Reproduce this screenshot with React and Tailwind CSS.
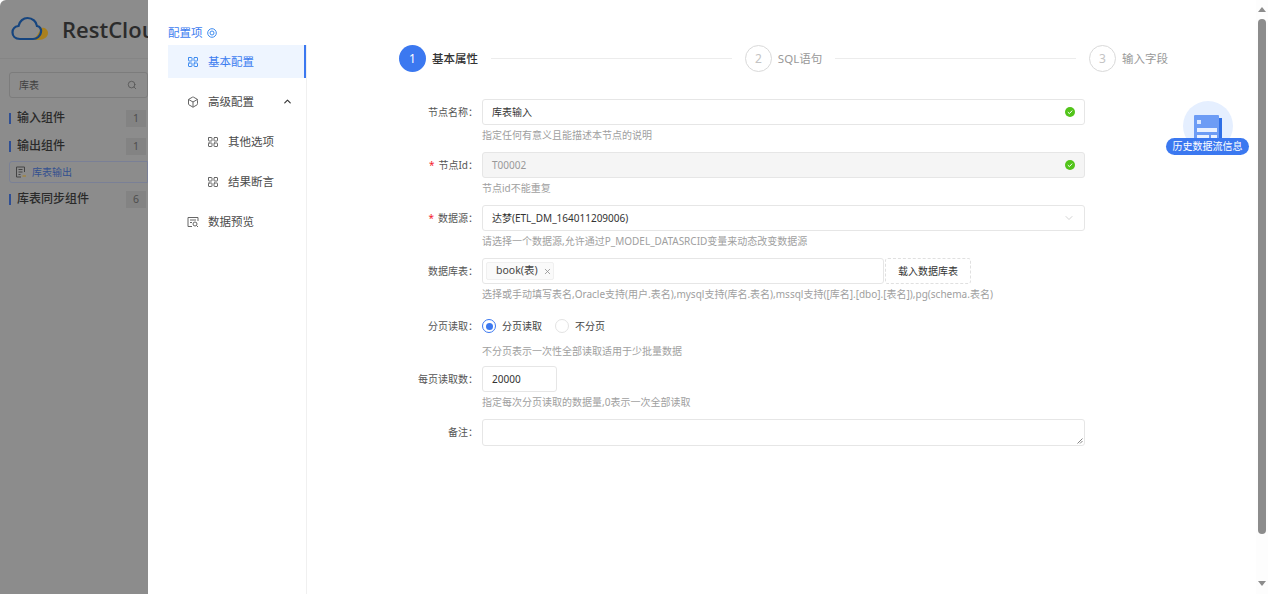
import { Box, ChevronDown, ChevronUp, LayoutGrid, Search, X } from "lucide-react";

const font = "font-['Noto_Sans','Noto_Sans_CJK_SC',sans-serif]";

function Group({ name, count }) {
  return (
    <div className="flex items-center h-[28px] pl-[9px]">
      <span className="w-[2px] h-[11px] bg-[#2f4f94] mr-[6px]" />
      <span className="flex-1 text-[12px] font-medium text-[#2a2a2a]">{name}</span>
      {count && <span className="w-[20px] h-[17px] mr-[2px] bg-[#838383] text-[10.5px] leading-[17px] text-center text-[#4d4d4d]">{count}</span>}
    </div>
  );
}

function MenuItem({ icon, label, active, sub, chevron }) {
  return (
    <div className={`flex items-center h-[33px] ${sub ? "pl-[39px]" : "pl-[19px]"} ${active ? "bg-[#eef5ff] text-[#3d7df0] border-r-[2px] border-[#3b78f0]" : "text-[#4a4a4a]"}`}>
      <span className="w-[12px] h-[12px] mr-[9px] flex items-center justify-center">{icon}</span>
      <span className="text-[11.5px]">{label}</span>
      {chevron && <ChevronUp className="w-[11px] h-[11px] ml-[28px] text-[#333]" strokeWidth={2.5} />}
    </div>
  );
}

function PreviewIcon() {
  return (
    <svg viewBox="0 0 12 12" className="w-[12px] h-[12px]" fill="none" stroke="#666" strokeWidth="1">
      <path d="M11 5V1.5H1V10.5H5" />
      <path d="M3 4H9M3 6.5H5" />
      <circle cx="8" cy="8" r="2" />
      <path d="M9.5 9.5L11 11" />
    </svg>
  );
}

function Step({ n, label, active }) {
  return (
    <div className="flex items-center shrink-0">
      <span className={`w-[27px] h-[27px] rounded-full flex items-center justify-center text-[12px] ${active ? "bg-[#3b78f0] text-white" : "border border-[#d9d9d9] text-[#c4c4c4]"}`}>{n}</span>
      <span className={`ml-[6px] text-[11.5px] ${active ? "font-medium text-[#333]" : "text-[#999]"}`}>{label}</span>
    </div>
  );
}

function Check() {
  return (
    <svg viewBox="0 0 10 10" className="w-[10px] h-[10px]">
      <circle cx="5" cy="5" r="5" fill="#52c41a" />
      <path d="M2.8 5.1L4.4 6.6L7.2 3.6" fill="none" stroke="#fff" strokeWidth="1" />
    </svg>
  );
}

function Row({ label, required, hint, height = "h-[26px]", gap = "mb-[27px]", children }) {
  return (
    <div className={`flex ${gap}`}>
      <div className={`w-[83px] shrink-0 flex items-center justify-end pr-[4px] text-[10px] text-[#555] ${height}`}>
        {required && <span className="text-[#f5222d] mr-[4px]">*</span>}
        <span>{label}：</span>
      </div>
      <div className="flex-1 relative">
        <div className={height}>{children}</div>
        {hint && <div className="absolute left-0 top-full text-[10px] leading-[20px] text-[#a0a0a0] whitespace-nowrap">{hint}</div>}
      </div>
    </div>
  );
}

const inputBox = "h-[26px] border border-[#e6e6e6] rounded-[3px] flex items-center px-[9px] text-[10px]";

export default function App() {
  return (
    <div className={`${font} relative flex h-[594px] w-[1268px] overflow-hidden bg-white`}>
      {/* dimmed page behind the drawer */}
      <aside className="w-[148px] shrink-0 bg-[#8c8c8c] overflow-hidden rounded-tl-[6px]">
        <div className="w-[220px] h-[59px] flex items-center pl-[11px] border-b border-[#858585]">
          <svg viewBox="0 0 38 26" className="w-[38px] h-[26px]" fill="none">
            <path d="M27 24C33 24 37 21 37 17C37 13 33 11 30 12C28 16 26 21 21 24Z" fill="#a9801f" />
            <path d="M9 23C4 23 1.500 20 1.500 16.500C1.500 13 4 10.500 7.500 10C8.500 5 12.500 2 16.500 2C21.500 2 25.500 5.500 26 10C29 10.500 30.500 13 30 16C29.500 20 26 23 22 23Z" stroke="#16457f" strokeWidth="2.200" />
          </svg>
          <span className="ml-[13px] text-[22px] font-semibold text-[#2b2b2b] font-['Open_Sans',sans-serif]">RestCloud</span>
        </div>
        <div className="pt-[13px] pl-[9px]">
          <div className="w-[139px] h-[26px] border border-[#7c7c7c] rounded-[3px] flex items-center pl-[9px] pr-[10px] text-[10px] text-[#3f3f3f]">
            <span className="flex-1">库表</span>
            <Search className="w-[10px] h-[10px] text-[#555]" />
          </div>
        </div>
        <div className="mt-[6px]">
          <Group name="输入组件" count="1" />
          <Group name="输出组件" count="1" />
          <div className="mx-[9px] mr-0 mt-[1px] mb-[2px] h-[22px] border border-[#7a8096] rounded-l-[3px] flex items-center pl-[5px]">
            <svg viewBox="0 0 12 12" className="w-[12px] h-[12px]" fill="none" stroke="#444" strokeWidth="1">
              <path d="M9.500 6V1H1.500V11H6M3.500 3.500H7.500M3.500 6H7.500M3.500 8.500H5.500" />
              <path d="M7.500 10H11" stroke="#a9801f" />
            </svg>
            <span className="ml-[5px] text-[10px] text-[#33508f]">库表输出</span>
          </div>
          <Group name="库表同步组件" count="6" />
        </div>
      </aside>

      {/* config menu */}
      <nav className="w-[159px] shrink-0 pl-[20px] pt-[25px]">
        <div className="flex items-center h-[15px] mb-[5px] text-[11.500px] text-[#3d7df0]">
          配置项
          <svg viewBox="0 0 10 10" className="w-[10px] h-[10px] ml-[4px]" fill="none" stroke="#3d8bf0" strokeWidth="1">
            <circle cx="5" cy="5" r="4.300" />
            <circle cx="5" cy="5" r="2" />
          </svg>
        </div>
        <div className="border-r border-[#f0f0f0] h-[552px] flex flex-col gap-[7px]">
          <MenuItem active label="基本配置" icon={<LayoutGrid className="w-[12px] h-[12px] text-[#3d8bf0]" />} />
          <MenuItem label="高级配置" chevron icon={<Box className="w-[12px] h-[12px] text-[#666]" />} />
          <MenuItem sub label="其他选项" icon={<LayoutGrid className="w-[12px] h-[12px] text-[#666]" />} />
          <MenuItem sub label="结果断言" icon={<LayoutGrid className="w-[12px] h-[12px] text-[#666]" />} />
          <MenuItem label="数据预览" icon={<PreviewIcon />} />
        </div>
      </nav>

      {/* form */}
      <main className="flex-1 pl-[92px] pt-[45px]">
        <div className="flex items-center w-[769px] h-[27px]">
          <Step n="1" label="基本属性" active />
          <span className="flex-1 h-px bg-[#ececec] mx-[13px]" />
          <Step n="2" label="SQL语句" />
          <span className="flex-1 h-px bg-[#ececec] mx-[13px]" />
          <Step n="3" label="输入字段" />
        </div>

        <div className="w-[686px] mt-[27px]">
          <Row label="节点名称" hint="指定任何有意义且能描述本节点的说明">
            <div className={`${inputBox} justify-between text-[#333]`}>库表输入<Check /></div>
          </Row>
          <Row label="节点Id" required hint="节点id不能重复">
            <div className={`${inputBox} justify-between bg-[#f5f5f5] text-[#999]`}>T00002<Check /></div>
          </Row>
          <Row label="数据源" required hint="请选择一个数据源,允许通过P_MODEL_DATASRCID变量来动态改变数据源">
            <div className={`${inputBox} justify-between text-[#333]`}>
              达梦(ETL_DM_164011209006)
              <ChevronDown className="w-[12px] h-[12px] text-[#c4c4c4]" strokeWidth={1.500} />
            </div>
          </Row>
          <Row label="数据库表" hint="选择或手动填写表名,Oracle支持(用户.表名),mysql支持(库名.表名),mssql支持([库名].[dbo].[表名]),pg(schema.表名)" gap="mb-[27px]">
            <div className="flex gap-px">
              <div className="w-[402px] h-[26px] border border-[#e6e6e6] rounded-[3px] flex items-center px-[3px]">
                <span className="h-[18px] w-[68px] bg-[#fafafa] border border-[#f0f0f0] rounded-[2px] flex items-center pl-[9px] text-[10.500px] text-[#444]">
                  book(表)
                  <X className="w-[9px] h-[9px] ml-[5px] text-[#888]" />
                </span>
              </div>
              <button className="w-[86px] h-[26px] border border-dashed border-[#e0e0e0] rounded-[3px] text-[10px] text-[#333]">载入数据库表</button>
            </div>
          </Row>
          <Row label="分页读取" height="h-[30px]" hint="不分页表示一次性全部读取适用于少批量数据" gap="mb-[25px]">
            <div className="h-[30px] flex items-center text-[10px] text-[#444]">
              <span className="w-[14px] h-[14px] rounded-full border border-[#3b78f0] flex items-center justify-center">
                <span className="w-[7px] h-[7px] rounded-full bg-[#3b78f0]" />
              </span>
              <span className="ml-[6px]">分页读取</span>
              <span className="ml-[13px] w-[14px] h-[14px] rounded-full border border-[#e3e3e3]" />
              <span className="ml-[6px]">不分页</span>
            </div>
          </Row>
          <Row label="每页读取数" hint="指定每次分页读取的数据量,0表示一次全部读取">
            <div className={`${inputBox} w-[75px] text-[#333]`}>20000</div>
          </Row>
          <Row label="备注" gap="mb-0">
            <div className={`${inputBox} relative h-[27px]`}>
              <svg viewBox="0 0 6 6" className="absolute right-[1px] bottom-[1px] w-[6px] h-[6px]" stroke="#666" strokeWidth="0.800">
                <path d="M0.500 5.500L5.500 0.500M3 5.500L5.500 3" />
              </svg>
            </div>
          </Row>
        </div>
      </main>

      {/* window scrollbar */}
      <div className="w-[12px] shrink-0 bg-[#fdfdfd] flex flex-col items-center">
        <span className="mt-[7px] w-0 h-0 border-x-[4px] border-x-transparent border-b-[5px] border-b-[#8c8c8c]" />
        <span className="mt-[7px] w-[8px] h-[515px] rounded-full bg-[#8c8c8c]" />
        <span className="mt-[47px] w-0 h-0 border-x-[4px] border-x-transparent border-t-[5px] border-t-[#8c8c8c]" />
      </div>

      {/* floating badge */}
      <div className="absolute left-[1166px] top-[101px] w-[83px] h-[54px] flex flex-col items-center">
        <div className="w-[50px] h-[50px] rounded-full bg-[#e5efff] flex items-center justify-center">
          <svg viewBox="0 0 30 32" className="w-[30px] h-[32px] mt-[8px]">
            <rect x="24" y="4" width="5" height="28" fill="#2f6fe6" />
            <rect x="1" y="1" width="25" height="31" rx="1" fill="#6d9cf5" />
            <rect x="4" y="6" width="4" height="4" fill="#dce8ff" />
            <rect x="4" y="14" width="20" height="4" fill="#eaf1ff" />
            <rect x="4" y="21" width="12" height="4" fill="#eaf1ff" />
            <rect x="18" y="21" width="6" height="4" fill="#eaf1ff" />
          </svg>
        </div>
        <div className="absolute left-0 top-[37px] w-[83px] h-[17px] rounded-full bg-[#3b78f0] text-white text-[10px] leading-[17px] text-center whitespace-nowrap">历史数据流信息</div>
      </div>
    </div>
  );
}
